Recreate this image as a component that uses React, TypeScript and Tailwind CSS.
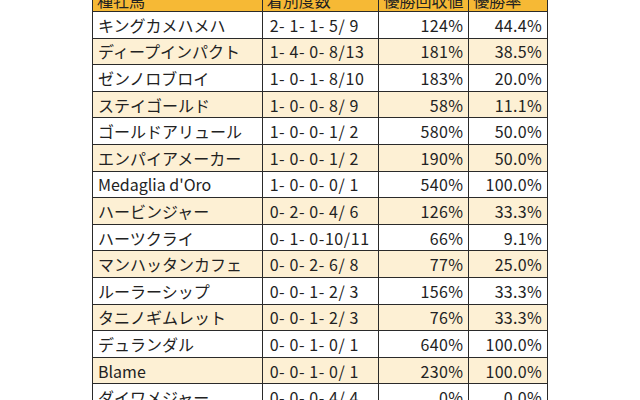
import React from 'react';

type Row = [string, string, string, string];

const rows: Row[] = [
  ['キングカメハメハ', '2- 1- 1- 5/ 9', '124%', '44.4%'],
  ['ディープインパクト', '1- 4- 0- 8/13', '181%', '38.5%'],
  ['ゼンノロブロイ', '1- 0- 1- 8/10', '183%', '20.0%'],
  ['ステイゴールド', '1- 0- 0- 8/ 9', '58%', '11.1%'],
  ['ゴールドアリュール', '1- 0- 0- 1/ 2', '580%', '50.0%'],
  ['エンパイアメーカー', '1- 0- 0- 1/ 2', '190%', '50.0%'],
  ["Medaglia d'Oro", '1- 0- 0- 0/ 1', '540%', '100.0%'],
  ['ハービンジャー', '0- 2- 0- 4/ 6', '126%', '33.3%'],
  ['ハーツクライ', '0- 1- 0-10/11', '66%', '9.1%'],
  ['マンハッタンカフェ', '0- 0- 2- 6/ 8', '77%', '25.0%'],
  ['ルーラーシップ', '0- 0- 1- 2/ 3', '156%', '33.3%'],
  ['タニノギムレット', '0- 0- 1- 2/ 3', '76%', '33.3%'],
  ['デュランダル', '0- 0- 1- 0/ 1', '640%', '100.0%'],
  ['Blame', '0- 0- 1- 0/ 1', '230%', '100.0%'],
  ['ダイワメジャー', '0- 0- 0- 4/ 4', '0%', '0.0%'],
];

const cell = 'h-full flex items-center border-l border-[#2a2a2a] whitespace-pre';

const App: React.FC = () => {
  return (
    <div className="w-[640px] h-[400px] overflow-hidden bg-white text-[#222] text-[16px] leading-none font-['Noto_Sans_CJK_JP','Noto_Sans',sans-serif]">
      <div className="ml-[92px] mt-[-15px] w-[456px] border-r border-[#2a2a2a]">
        <div className="flex h-[27px] bg-[#f6b935] border-b border-[#2a2a2a] pt-[3px]">
          <div className={`${cell} w-[170px] pl-[4px]`}>種牡馬</div>
          <div className={`${cell} w-[117px] pl-[4px]`}>着別度数</div>
          <div className={`${cell} w-[90px] pl-[4px]`}>優勝回収値</div>
          <div className={`${cell} w-[79px] pl-[4px]`}>優勝率</div>
        </div>
        {rows.map((r, i) => (
          <div
            key={r[0]}
            className={`flex h-[26.6px] border-b border-[#2a2a2a] ${i % 2 === 1 ? 'bg-[#fdf0d4]' : 'bg-white'}`}>
            <div className={`${cell} w-[170px] pl-[5px]`}>{r[0]}</div>
            <div className={`${cell} w-[117px] pl-[7px] tracking-[0.6px]`}>{r[1]}</div>
            <div className={`${cell} w-[90px] justify-end pr-[5px] tracking-[0.3px]`}>{r[2]}</div>
            <div className={`${cell} w-[79px] justify-end pr-[5px] tracking-[0.3px]`}>{r[3]}</div>
          </div>
        ))}
      </div>
    </div>
  );
};

export default App;
